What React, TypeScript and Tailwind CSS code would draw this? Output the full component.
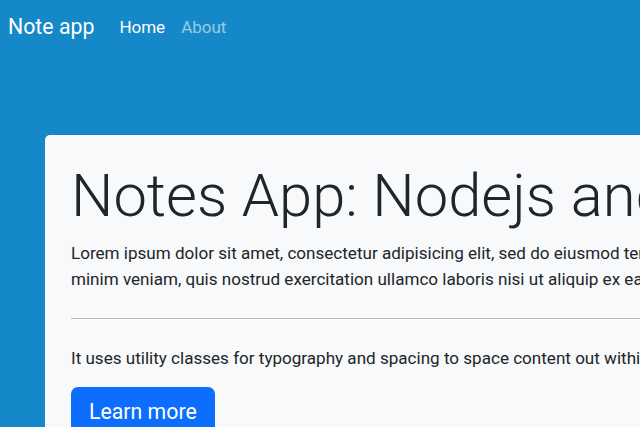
export default function App() {
  return (
    <div className="h-[427px] w-[640px] overflow-hidden bg-[#1488c8] font-['Roboto',sans-serif] text-[#212529]">
      {/* navbar */}
      <nav className="flex items-center px-2 pt-[11px]">
        <a className="mr-[17px] text-[21.3px] leading-[32px] text-white">Note app</a>
        <ul className="flex text-[17px] leading-[26px]">
          <li>
            <a className="px-2 text-white">Home</a>
          </li>
          <li>
            <a className="px-2 text-white/55">About</a>
          </li>
        </ul>
      </nav>

      <div className="mt-[92px] pl-[45px]">
        <div className="w-[1100px] rounded-[5px] bg-[#f8f9fa] px-[26px] pt-[25px] pb-8">
          <h1 className="mb-2 text-[59.7px] leading-[72px] font-light whitespace-nowrap">
            Notes App: Nodejs and Express with MongoDB
          </h1>
          <p className="text-[17.07px] leading-[26px] font-normal whitespace-nowrap">
            Lorem ipsum dolor sit amet, consectetur adipisicing elit, sed do eiusmod tempor incididunt ut labore et dolore magna aliqua. Ut enim ad
            <br />
            minim veniam, quis nostrud exercitation ullamco laboris nisi ut aliquip ex ea commodo consequat.
          </p>
          <hr className="my-[26px] border-t border-black/25" />
          <p className="mb-[16px] text-[17.07px] leading-[26px] whitespace-nowrap">
            It uses utility classes for typography and spacing to space content out within the larger container.
          </p>
          <a className="inline-block rounded-[7px] bg-[#0d6efd] px-[18px] py-[8px] text-[21.3px] leading-[33px] text-white">
            Learn more
          </a>
        </div>
      </div>
    </div>
  );
}
